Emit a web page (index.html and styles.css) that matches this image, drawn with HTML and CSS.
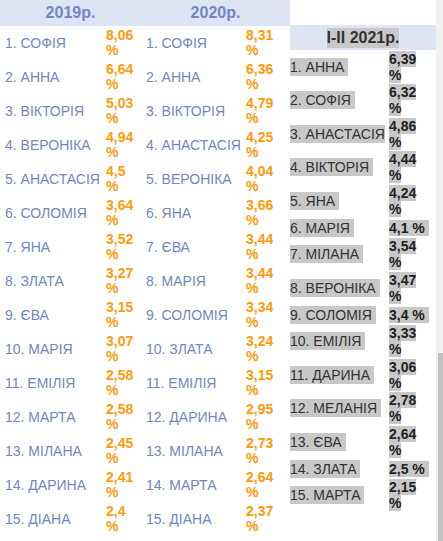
FILE: index.html
```html
<!DOCTYPE html>
<html lang="uk">
<head>
<meta charset="utf-8">
<title>Імена</title>
<link rel="stylesheet" href="styles.css">
</head>
<body>
<div class="page">
  <div class="left">
    <div class="lhead">2019р.</div>
    <div class="lhead">2020р.</div>

    <div class="nm">1. СОФІЯ</div><div class="pc">8,06 %</div><div class="nm">1. СОФІЯ</div><div class="pc pc2">8,31 %</div>
    <div class="nm">2. АННА</div><div class="pc">6,64 %</div><div class="nm">2. АННА</div><div class="pc pc2">6,36 %</div>
    <div class="nm">3. ВІКТОРІЯ</div><div class="pc">5,03 %</div><div class="nm">3. ВІКТОРІЯ</div><div class="pc pc2">4,79 %</div>
    <div class="nm">4. ВЕРОНІКА</div><div class="pc">4,94 %</div><div class="nm">4. АНАСТАСІЯ</div><div class="pc pc2">4,25 %</div>
    <div class="nm">5. АНАСТАСІЯ</div><div class="pc">4,5 %</div><div class="nm">5. ВЕРОНІКА</div><div class="pc pc2">4,04 %</div>
    <div class="nm">6. СОЛОМІЯ</div><div class="pc">3,64 %</div><div class="nm">6. ЯНА</div><div class="pc pc2">3,66 %</div>
    <div class="nm">7. ЯНА</div><div class="pc">3,52 %</div><div class="nm">7. ЄВА</div><div class="pc pc2">3,44 %</div>
    <div class="nm">8. ЗЛАТА</div><div class="pc">3,27 %</div><div class="nm">8. МАРІЯ</div><div class="pc pc2">3,44 %</div>
    <div class="nm">9. ЄВА</div><div class="pc">3,15 %</div><div class="nm">9. СОЛОМІЯ</div><div class="pc pc2">3,34 %</div>
    <div class="nm">10. МАРІЯ</div><div class="pc">3,07 %</div><div class="nm">10. ЗЛАТА</div><div class="pc pc2">3,24 %</div>
    <div class="nm">11. ЕМІЛІЯ</div><div class="pc">2,58 %</div><div class="nm">11. ЕМІЛІЯ</div><div class="pc pc2">3,15 %</div>
    <div class="nm">12. МАРТА</div><div class="pc">2,58 %</div><div class="nm">12. ДАРИНА</div><div class="pc pc2">2,95 %</div>
    <div class="nm">13. МІЛАНА</div><div class="pc">2,45 %</div><div class="nm">13. МІЛАНА</div><div class="pc pc2">2,73 %</div>
    <div class="nm">14. ДАРИНА</div><div class="pc">2,41 %</div><div class="nm">14. МАРТА</div><div class="pc pc2">2,64 %</div>
    <div class="nm">15. ДІАНА</div><div class="pc">2,4 %</div><div class="nm">15. ДІАНА</div><div class="pc pc2">2,37 %</div>
  </div>

  <div class="right">
    <div class="rhead"><span class="hl">I-II 2021р.</span></div>
    <div class="rgrid">
      <div class="rn"><span class="hl">1. АННА </span></div><div class="rp"><span class="hl">6,39 %</span></div>
      <div class="rn"><span class="hl">2. СОФІЯ </span></div><div class="rp"><span class="hl">6,32 %</span></div>
      <div class="rn"><span class="hl">3. АНАСТАСІЯ</span></div><div class="rp"><span class="hl">4,86 %</span></div>
      <div class="rn"><span class="hl">4. ВІКТОРІЯ </span></div><div class="rp"><span class="hl">4,44 %</span></div>
      <div class="rn"><span class="hl">5. ЯНА </span></div><div class="rp"><span class="hl">4,24 %</span></div>
      <div class="rn"><span class="hl">6. МАРІЯ </span></div><div class="rp"><span class="hl">4,1 %&nbsp;</span></div>
      <div class="rn"><span class="hl">7. МІЛАНА </span></div><div class="rp"><span class="hl">3,54 %</span></div>
      <div class="rn"><span class="hl">8. ВЕРОНІКА </span></div><div class="rp"><span class="hl">3,47 %</span></div>
      <div class="rn"><span class="hl">9. СОЛОМІЯ </span></div><div class="rp"><span class="hl">3,4 %&nbsp;</span></div>
      <div class="rn"><span class="hl">10. ЕМІЛІЯ </span></div><div class="rp"><span class="hl">3,33 %</span></div>
      <div class="rn"><span class="hl">11. ДАРИНА </span></div><div class="rp"><span class="hl">3,06 %</span></div>
      <div class="rn"><span class="hl">12. МЕЛАНІЯ </span></div><div class="rp"><span class="hl">2,78 %</span></div>
      <div class="rn"><span class="hl">13. ЄВА </span></div><div class="rp"><span class="hl">2,64 %</span></div>
      <div class="rn"><span class="hl">14. ЗЛАТА </span></div><div class="rp"><span class="hl">2,5 %&nbsp;</span></div>
      <div class="rn"><span class="hl">15. МАРТА </span></div><div class="rp"><span class="hl">2,15 %</span></div>
    </div>
  </div>

  <div class="scrollbar"><div class="thumb"></div></div>
</div>
</body>
</html>
```

FILE: styles.css
```css
html, body {
  margin: 0;
  padding: 0;
  background: #ffffff;
}

body {
  font-family: "Liberation Sans", Arial, sans-serif;
  font-size: 14px;
}

.page {
  display: flex;
  height: 541px;
  overflow: hidden;
}

.left {
  width: 290px;
  flex: none;
  display: grid;
  grid-template-columns: 105px 36px 104px 45px;
  grid-template-rows: 26px;
  grid-auto-rows: 34px;
  align-content: start;
}

.lhead {
  grid-column: span 2;
  background: #dde4f4;
  color: #6f87c2;
  font-weight: bold;
  font-size: 16px;
  line-height: 26px;
  text-align: center;
}

.nm {
  display: flex;
  align-items: center;
  padding-left: 5px;
  color: #6f87c2;
  white-space: nowrap;
}

.pc {
  padding: 2px 0 0 1px;
  line-height: 15px;
  font-weight: bold;
  color: #ff9a0a;
}

.pc2 {
  padding-right: 4px;
}

.right {
  width: 146px;
  flex: none;
  margin-top: 25px;
  color: #333333;
}

.rhead {
  height: 25px;
  background: #dde4f4;
  display: flex;
  align-items: center;
  justify-content: center;
  font-weight: bold;
  font-size: 16px;
}

.rhead .hl {
  padding: 1px 0;
}

.hl {
  background: #c8c8c8;
}

.rgrid {
  display: grid;
  grid-template-columns: 99px 42px;
  align-items: center;
}

.rn {
  min-height: 20px;
  display: flex;
  align-items: center;
  white-space: pre;
}

.rn .hl {
  padding: 1px 0;
}

.rp {
  padding: 0.75px 0;
  line-height: 16px;
  font-weight: bold;
  color: #222222;
}

.scrollbar {
  width: 7px;
  flex: none;
  margin-left: auto;
  background: #f1f1f1;
  display: flex;
  flex-direction: column;
  justify-content: flex-end;
}

.thumb {
  height: 188px;
  margin-left: 2px;
  background: #c1c1c1;
}
```
